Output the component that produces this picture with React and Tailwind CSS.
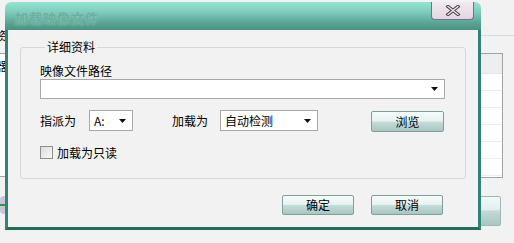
import React from "react";

const FONT = { fontFamily: '"Noto Sans CJK SC", "Liberation Sans", sans-serif' };

function Arrow() {
  return (
    <svg width="7" height="4" viewBox="0 0 7 4" className="shrink-0">
      <path d="M0 0h7L3.5 4z" fill="#111" />
    </svg>
  );
}

function Combo({ className, children }) {
  return (
    <div className={`flex items-center justify-between border border-[#a8a8a8] bg-white pl-[4px] pr-[6px] text-[12px] leading-[14px] text-black ${className}`}>
      <span>{children}</span>
      <Arrow />
    </div>
  );
}

function SkinButton({ className, children }) {
  return (
    <button className={`flex items-center justify-center rounded-[2px] border border-[#809e9a] bg-[linear-gradient(#f5fbfb_0%,#e6f2f1_48%,#c6dcd9_52%,#a8c6c2_100%)] text-[12px] leading-[14px] text-black ${className}`}>
      {children}
    </button>
  );
}

function CloseGlyph() {
  return (
    <svg width="16" height="11" viewBox="0 0 16 11">
      <path d="M3 1.5L13 9.5M13 1.5L3 9.5" stroke="#4a3f4c" strokeWidth="3.4" strokeLinecap="square" />
      <path d="M3 1.5L13 9.5M13 1.5L3 9.5" stroke="#efe6ef" strokeWidth="1.4" strokeLinecap="square" />
    </svg>
  );
}

export default function App() {
  return (
    <div className="relative h-[243px] w-[514px] overflow-hidden bg-[#f2f2f2]" style={FONT}>
      {/* underlying window, right side */}
      <div className="absolute left-[470px] top-[35px] h-px w-[44px] bg-[#d9d9d9]" />
      <div className="absolute left-[470px] top-[53px] flex h-[125px] w-[33px] flex-col border border-[#a3a3a3] bg-white">
        <div className="h-[20px] border-b border-[#e4e4e4] bg-[#eeeeee]" />
        {[0, 1, 2, 3, 4, 5].map((i) => (
          <div key={i} className="h-[17px] border-b border-[#ececec]" />
        ))}
      </div>
      <div className="absolute left-[470px] top-[196px] h-[30px] w-[31px] rounded-[2px] border border-[#9fb7b4] bg-[linear-gradient(#f2f9f9_0%,#e2efee_45%,#c3dad7_50%,#a9c6c2_100%)]" />

      {/* underlying window, left side */}
      <div className="absolute left-[-4px] top-[29px] text-[12px] leading-[14px] text-black">资</div>
      <div className="absolute left-0 top-[53px] h-[124px] w-[10px] border-y border-[#a3a3a3] bg-white" />
      <div className="absolute left-[-5px] top-[59px] text-[12px] leading-[14px] text-black">器</div>
      <div className="absolute left-0 top-[196px] h-[18px] w-[8px] rounded-full bg-[#c9c3dc]" />
      <div className="absolute left-0 top-[204px] h-[2px] w-[6px] bg-[#2f9b3a]" />

      {/* dialog window */}
      <div className="absolute left-[5px] top-[2px] flex h-[228px] w-[476px] flex-col">
        <div className="relative flex h-[28px] shrink-0 items-start rounded-t-[6px] bg-[linear-gradient(#96e3d4_0%,#7fcdbd_35%,#5ea898_70%,#4a9181_100%)]">
          <span className="ml-[10px] mt-[8px] text-[13px] font-bold leading-[15px] tracking-[1px] text-[#6cae9f] [text-shadow:0_0_3px_rgba(140,205,190,1)]">
            加载映像文件
          </span>
          <div className="absolute right-[7px] top-0 flex h-[18px] w-[43px] items-center justify-center rounded-b-[4px] border border-t-0 border-[#7b6e7d] bg-[linear-gradient(#f1eaf1,#e2d6e3)]">
            <CloseGlyph />
          </div>
        </div>

        <div className="flex flex-1 flex-col border-x-[3px] border-b-[3px] border-x-[#2f8475] border-b-[#236d5f] bg-[#f2f2f2]">
          <fieldset className="mx-[12px] mt-[10px] rounded-[3px] border border-[#d2d9de] px-[19px] pb-[19px]">
            <legend className="ml-[5px] px-[2px] text-[12px] leading-[14px] text-black">详细资料</legend>

            <div className="mt-[10px] text-[12px] leading-[14px] text-black">映像文件路径</div>
            <Combo className="mt-px h-[20px] w-[405px]"> </Combo>

            <div className="mt-[11px] flex h-[21px] items-center">
              <span className="w-[49px] text-[12px] leading-[14px] text-black">指派为</span>
              <Combo className="h-[21px] w-[44px]">A:</Combo>
              <span className="ml-[39px] w-[48px] text-[12px] leading-[14px] text-black">加载为</span>
              <Combo className="h-[21px] w-[98px]">自动检测</Combo>
              <SkinButton className="ml-[53px] mt-[2px] h-[21px] w-[73px]">浏览</SkinButton>
            </div>

            <div className="mt-[15px] flex h-[13px] items-center">
              <div className="h-[13px] w-[13px] border border-[#8e8f8f] bg-[linear-gradient(135deg,#dcdcdc,#f9f9f9)]" />
              <span className="ml-[4px] text-[12px] leading-[14px] text-black">加载为只读</span>
            </div>
          </fieldset>

          <div className="mt-[16px] flex justify-end gap-[17px] pr-[35px]">
            <SkinButton className="h-[20px] w-[72px]">确定</SkinButton>
            <SkinButton className="h-[20px] w-[72px]">取消</SkinButton>
          </div>
        </div>
      </div>
    </div>
  );
}
